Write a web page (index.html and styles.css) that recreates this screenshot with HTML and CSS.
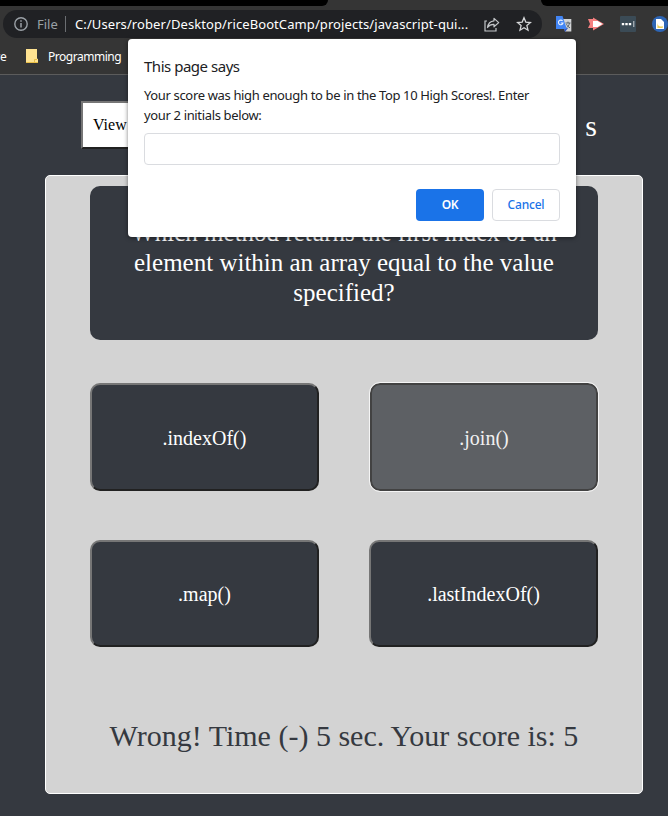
FILE: index.html
```html
<!DOCTYPE html>
<html lang="en">
<head>
<meta charset="utf-8">
<title>JavaScript Quiz</title>
<link rel="stylesheet" href="styles.css">
</head>
<body>
<header class="browser">
  <div class="tabs"><span class="tabs-left"></span><span class="tabs-right"></span></div>
  <div class="toolbar">
    <div class="address">
      <svg class="info" width="14" height="14" viewBox="0 0 14 14"><circle cx="7" cy="7" r="6.2" fill="none" stroke="#9aa0a6" stroke-width="1.4"/><path d="M7 6v4.5M7 3.3v1.5" stroke="#9aa0a6" stroke-width="1.5"/></svg>
      <span class="scheme">File</span>
      <span class="divider"></span>
      <span class="url">C:/Users/rober/Desktop/riceBootCamp/projects/javascript-qui...</span>
      <svg class="share" width="16" height="15" viewBox="0 0 16 15" fill="none" stroke="#c4c7ca" stroke-width="1.2"><path d="M3 4H1v10h11v-3"/><path d="M10 1.4l4.7 4.2L10 9.8V7.4C7 7.3 5 8.3 3.5 10.5 4 7 6 4.2 10 3.8z" stroke-linejoin="round"/></svg>
      <svg class="star" width="16" height="16" viewBox="0 0 16 16"><path d="M8 1.8l1.8 4.3 4.7.4-3.6 3.1 1.1 4.6L8 11.8l-4 2.4 1.1-4.6-3.6-3.1 4.7-.4z" fill="none" stroke="#d5d7d9" stroke-width="1.3"/></svg>
    </div>
    <div class="extensions">
      <svg width="16" height="16" viewBox="0 0 16 16"><path d="M6 3h9.3v12.5H9z" fill="#d2d4d6"/><path d="M8 12h4l-3 4z" fill="#3057c8"/><path d="M0 0h6.5L10.8 13H0z" fill="#4285f4"/><path d="M6.6 5A2.3 2.3 0 1 0 7 7H4.8" fill="none" stroke="#e7effd" stroke-width="1.1"/><path d="M9.5 7h5M12 5.6V7m1.5 0c-.5 2.5-1.5 3.7-3 4.8M10.5 8.2c.8 1.8 2 2.8 3.5 3.7" fill="none" stroke="#596269" stroke-width="1"/></svg>
      <svg width="16" height="16" viewBox="0 0 16 16"><path d="M0 3h5V1.5L16 8 5 14.5V12H0l2-4z" fill="#f58080"/><path d="M5 5h5v6H5zM10 5.3L14.5 8 10 10.7z" fill="#fff"/></svg>
      <svg width="16" height="16" viewBox="0 0 16 16"><rect width="16" height="16" rx="1" fill="#3b4b56"/><path d="M1.8 7h2.4v2.3H1.8zM5.3 7h2.4v2.3H5.3zM8.8 7h2.4v2.3H8.8z" fill="#fff"/><path d="M13.8 5v6" stroke="#cbd1d5"/></svg>
      <svg width="16" height="16" viewBox="0 0 16 16"><circle cx="8" cy="8" r="8" fill="#2d65b5"/><path d="M4 3h5l3 3v7H4z" fill="#fff"/><path d="M5.4 6.5c0 4 3 4.7 5.3 3.4v2H5.4z" fill="#ecd05b"/></svg>
    </div>
  </div>
  <div class="bookmarks">
    <span class="bookmark-cut">ve</span>
    <svg class="folder" width="12" height="14" viewBox="0 0 12 14"><path d="M0 0h11v9.5l1 .5v4H0z" fill="#ffe391"/><path d="M8.5 13v-2.5H11M0 13.5h12" fill="none" stroke="#e9bf48"/></svg>
    <span class="bookmark">Programming</span>
  </div>
</header>

<main class="page">
  <div class="heading">
    <button class="scores">View</button>
    <span class="timer">s</span>
  </div>
  <section class="quiz">
    <h1 class="question">Which method returns the first index of an<br>element within an array equal to the value<br>specified?</h1>
    <div class="answers">
      <button class="answer">.indexOf()</button>
      <button class="answer selected">.join()</button>
      <button class="answer">.map()</button>
      <button class="answer">.lastIndexOf()</button>
    </div>
    <p class="result">Wrong! Time (-) 5 sec. Your score is: 5</p>
  </section>
</main>

<div class="dialog" role="dialog">
  <h2 class="dialog-title">This page says</h2>
  <p class="message">Your score was high enough to be in the Top 10 High Scores!. Enter<br>your 2 initials below:</p>
  <input class="initials" type="text" aria-label="Initials">
  <div class="actions"><button class="ok">OK</button><button class="cancel">Cancel</button></div>
</div>
</body>
</html>
```
FILE: styles.css
```css
* { box-sizing: border-box; }
body { margin: 0; height: 816px; overflow: hidden; background: #353940; font-family: "Liberation Serif", serif; }
button { font-family: inherit; margin: 0; }
.browser { height: 75px; background: #353535; border-bottom: 1px solid #5c5c5c; font-family: "Noto Sans", sans-serif; color: #fff; overflow: hidden; }
.tabs { height: 6px; display: flex; justify-content: space-between; }
.tabs-left { width: 328px; background: #000; border-bottom-right-radius: 6px; }
.tabs-right { width: 127px; background: #000; border-bottom-left-radius: 7px; }
.toolbar { height: 36px; padding: 4px 0 0 3px; display: flex; }
.address { flex: none; width: 539px; height: 28px; border-radius: 14px; background: #202124; display: flex; align-items: center; padding-left: 11px; font-size: 13px; white-space: nowrap; }
.scheme { margin-left: 9px; width: 22px; color: #9aa0a6; }
.divider { width: 1px; height: 16px; background: #6b6e72; margin: 0 9px 0 6px; }
.url { width: 401px; letter-spacing: 0.09px; }
.share { margin-left: 8px; flex: none; }
.star { margin-left: 16px; flex: none; }
.extensions { display: flex; gap: 16px; padding: 6px 0 0 14px; }
.extensions svg { flex: none; }
.bookmarks { display: flex; height: 28px; align-items: center; font-size: 12px; }
.bookmark-cut { width: 26px; margin-left: -6px; }
.folder { margin-left: 6px; }
.bookmark { margin-left: 10px; letter-spacing: -0.48px; }
.page { padding: 26px 25px 0 45px; }
.heading { height: 74px; padding: 0 46px 0 36px; display: flex; justify-content: space-between; }
.scores { width: 150px; height: 48px; padding: 0 10px; border: 2px solid; border-color: #767676 #212121 #212121 #767676; background: #fff; color: #000; font-size: 16px; text-align: left; }
.timer { font-size: 30px; line-height: 50px; color: #fff; }
.quiz { width: 598px; height: 619px; border: 1px solid #fff; border-radius: 5px; background: #d3d3d3; padding: 10px 44px; }
.question { margin: 0; height: 154px; border-radius: 10px; background: #353940; color: #fff; font-size: 25px; font-weight: 400; line-height: 30px; padding-top: 32px; text-align: center; }
.answers { margin-top: 43px; display: grid; grid-template-columns: 229px 229px; grid-template-rows: 108px 107px; gap: 49px 50px; }
.answer { border: 2px solid; border-color: #767676 #212121 #212121 #767676; border-radius: 10px; background: #353940; color: #fff; font-size: 20px; padding: 2px 0 0; }
.selected { margin: 0 0 0 1px; background: #5d6064; border-color: #424242; color: #f1f1f1; outline: 1px solid #f5f5f5; }
.result { margin: 71px 0 0; font-size: 30px; line-height: 36px; color: #353940; text-align: center; white-space: nowrap; }
.dialog { position: absolute; left: 128px; top: 39px; width: 448px; height: 198px; padding: 16px; border-radius: 4px; background: #fff; box-shadow: 0 1px 4px rgba(0,0,0,.5); font-family: "Noto Sans", sans-serif; color: #202124; }
.dialog-title { margin: 0; font-size: 15px; font-weight: 400; line-height: 22px; letter-spacing: -0.48px; }
.message { margin: 8px 0 0; font-size: 13px; line-height: 20px; letter-spacing: -0.35px; white-space: nowrap; }
.initials { display: block; margin-top: 8px; width: 416px; height: 32px; border: 1px solid #dadce0; border-radius: 4px; background: #fff; }
.actions { display: flex; justify-content: flex-end; gap: 8px; margin-top: 24px; }
.ok, .cancel { width: 68px; height: 32px; padding: 0 0 1px; border-radius: 4px; font-size: 12px; font-weight: 600; letter-spacing: -0.4px; }
.ok { border: 0; background: #1a73e8; color: #fff; }
.cancel { border: 1px solid #dadce0; background: #fff; color: #1a73e8; font-weight: 500; letter-spacing: -0.2px; }
```
